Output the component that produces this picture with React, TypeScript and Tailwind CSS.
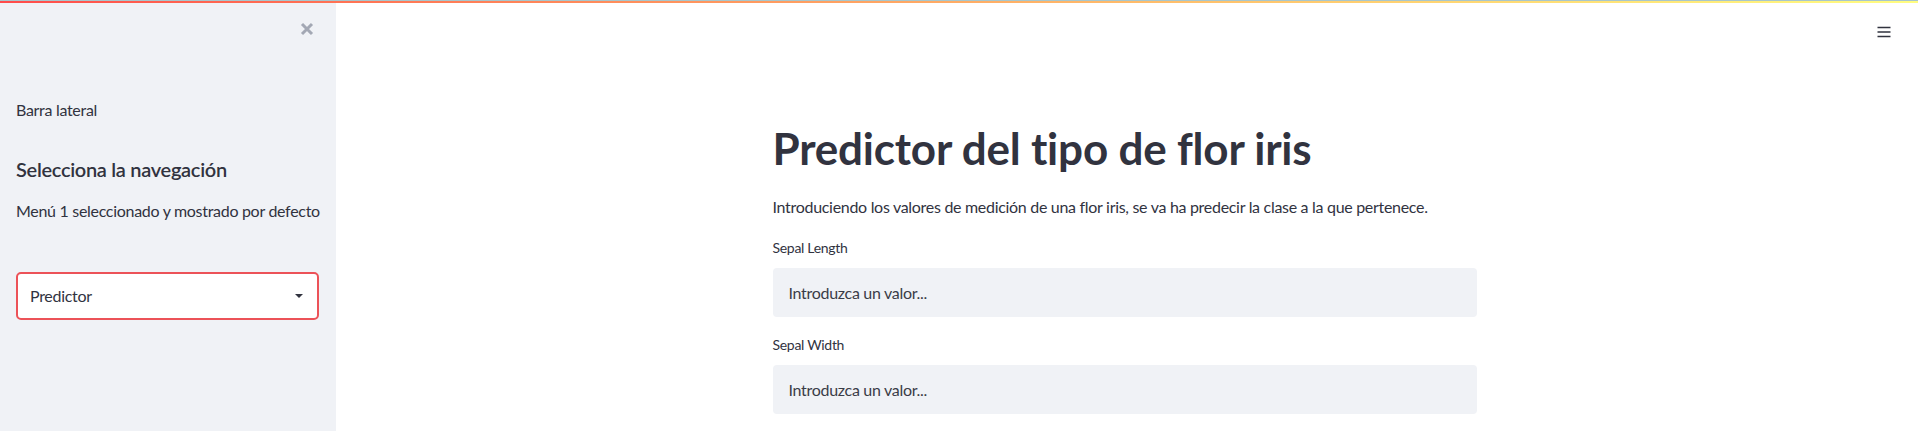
import React from "react";

function CloseIcon() {
  return (
    <svg width="14" height="14" viewBox="0 0 14 14" aria-hidden="true">
      <path d="M2 2 L12 12 M12 2 L2 12" stroke="#a3a8b4" strokeWidth="3" strokeLinecap="butt" />
    </svg>
  );
}

function MenuIcon() {
  return (
    <svg width="14" height="14" viewBox="0 0 14 14" aria-hidden="true">
      <path d="M0.5 2.5 H13.5 M0.5 7 H13.5 M0.5 11.5 H13.5" stroke="#31333f" strokeWidth="1.6" />
    </svg>
  );
}

function Caret() {
  return (
    <svg width="10" height="6" viewBox="0 0 10 6" aria-hidden="true">
      <path d="M1 1 L9 1 L5 5 Z" fill="#31333f" />
    </svg>
  );
}

function NumberInput({ label }: { label: string }) {
  return (
    <div className="flex flex-col">
      <label className="text-[14px] leading-[22px] tracking-[-0.3px] text-[#31333f]">{label}</label>
      <div className="mt-[9px] h-[49px] rounded-[4px] bg-[#f0f2f6] flex items-center px-[16px]">
        <span className="text-[16px] tracking-[-0.3px] text-[#3a3c47]">Introduzca un valor...</span>
      </div>
    </div>
  );
}

export default function App() {
  return (
    <div
      className="w-full h-[431px] overflow-hidden flex flex-col bg-white text-[#31333f]"
      style={{ fontFamily: "Lato, 'Noto Sans', sans-serif" }}
    >
      <div className="h-[1px] bg-[#a8c6cc] shrink-0" />
      <div className="h-[2px] bg-gradient-to-r from-[#ff4b4b] to-[#fffd80] shrink-0" />
      <div className="flex flex-1 min-h-0">
        <aside className="w-[336px] shrink-0 bg-[#f0f2f6] flex flex-col px-[16px]">
          <div className="flex justify-end pt-[19px] pr-[6px]">
            <CloseIcon />
          </div>
          <p className="mt-[61px] text-[16px] leading-[25px] tracking-[-0.3px]">Barra lateral</p>
          <h3 className="mt-[33px] text-[20px] leading-[28px] font-semibold tracking-[-0.3px]">Selecciona la navegación</h3>
          <p className="mt-[15px] text-[16px] leading-[25px] tracking-[-0.3px] whitespace-nowrap">
            Menú 1 seleccionado y mostrado por defecto
          </p>
          <div className="mt-[49px] h-[48px] w-[303px] rounded-[5px] border-2 border-[#ec5258] bg-white flex items-center justify-between pl-[12px] pr-[13px]">
            <span className="text-[16px] tracking-[-0.3px] text-[#31333f]">Predictor</span>
            <Caret />
          </div>
        </aside>
        <main className="flex-1 flex flex-col">
          <div className="h-[58px] flex items-center justify-end pr-[27px] shrink-0">
            <MenuIcon />
          </div>
          <div className="flex justify-center pr-[5px]">
            <div className="w-[704px] flex flex-col">
              <h1 className="mt-[61px] text-[44px] leading-[53px] font-bold text-[#31333f] tracking-[-0.2px]">
                Predictor del tipo de flor iris
              </h1>
              <p className="mt-[19px] text-[16px] leading-[25px] tracking-[-0.3px]">
                Introduciendo los valores de medición de una flor iris, se va ha predecir la clase a la que pertenece.
              </p>
              <div className="mt-[18px]">
                <NumberInput label="Sepal Length" />
              </div>
              <div className="mt-[17px]">
                <NumberInput label="Sepal Width" />
              </div>
            </div>
          </div>
        </main>
      </div>
    </div>
  );
}
